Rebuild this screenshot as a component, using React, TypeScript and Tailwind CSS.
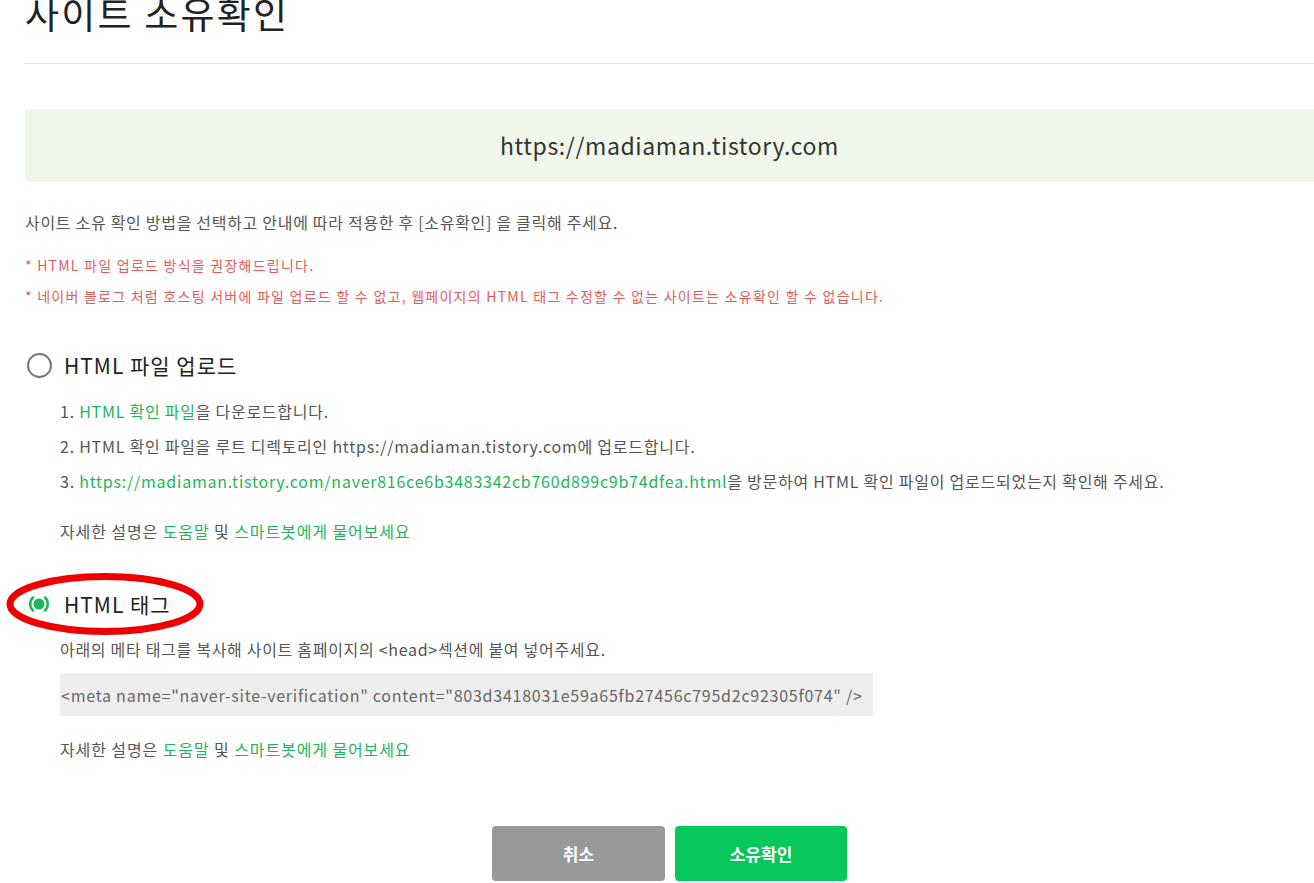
import React from "react";

const green = "text-[#1fb45a]";

function Help() {
  return (
    <p className="text-[16px] tracking-[0.9px] text-[#555] leading-[22px]">
      자세한 설명은 <span className={green}>도움말</span> 및{" "}
      <span className={green}>스마트봇에게 물어보세요</span>
    </p>
  );
}

export default function App() {
  return (
    <div
      className="relative w-[1314px] h-[883px] overflow-hidden bg-white"
      style={{ fontFamily: '"Noto Sans CJK KR", "Noto Sans", sans-serif' }}
    >
      <div className="pl-[25px]">
        <h1 className="mt-[-12px] text-[37px] leading-[50px] text-[#222] font-normal tracking-[2.2px]">
          사이트 소유확인
        </h1>
        <div className="mt-[25px] h-px bg-[#e3e3e3]" />

        <div className="mt-[45px] h-[73px] bg-[#f1f7ea] flex items-center justify-center text-[23px] tracking-[0.6px] text-[#333]">
          https://madiaman.tistory.com
        </div>

        <p className="mt-[29px] text-[16px] tracking-[0.7px] text-[#555] leading-[22px]">
          사이트 소유 확인 방법을 선택하고 안내에 따라 적용한 후 [소유확인] 을 클릭해 주세요.
        </p>
        <p className="mt-[22px] text-[14px] tracking-[1.25px] text-[#e55c5c] leading-[20px]">
          * HTML 파일 업로드 방식을 권장해드립니다.
        </p>
        <p className="mt-[11px] text-[14px] tracking-[1.25px] text-[#e55c5c] leading-[20px]">
          * 네이버 블로그 처럼 호스팅 서버에 파일 업로드 할 수 없고, 웹페이지의 HTML 태그 수정할 수 없는 사이트는 소유확인 할 수 없습니다.
        </p>

        <div className="mt-[45px] flex items-center gap-[12px]">
          <div className="w-[25px] h-[25px] rounded-full border-[2.5px] border-[#777] ml-[2px]" />
          <span className="text-[21px] tracking-[1px] text-[#222] leading-[28px]">HTML 파일 업로드</span>
        </div>

        <div className="pl-[35px]">
          <div className="mt-[21px] flex flex-col gap-[13px] text-[16px] tracking-[0.75px] text-[#555] leading-[22px]">
            <p>
              1. <span className={green}>HTML 확인 파일</span>을 다운로드합니다.
            </p>
            <p>2. HTML 확인 파일을 루트 디렉토리인 https://madiaman.tistory.com에 업로드합니다.</p>
            <p>
              3.{" "}
              <span className={green}>
                https://madiaman.tistory.com/naver816ce6b3483342cb760d899c9b74dfea.html
              </span>
              을 방문하여 HTML 확인 파일이 업로드되었는지 확인해 주세요.
            </p>
          </div>
          <div className="mt-[28px]">
            <Help />
          </div>
        </div>

        <div className="mt-[48px] flex items-center gap-[12px]">
          <svg width="26" height="26" viewBox="0 0 26 26" className="ml-[1px]">
            <path d="M7 6.5 A9 9 0 0 0 7 19.5" fill="none" stroke="#1fb45a" strokeWidth="2.5" strokeLinecap="round" />
            <path d="M19 6.5 A9 9 0 0 1 19 19.5" fill="none" stroke="#1fb45a" strokeWidth="2.5" strokeLinecap="round" />
            <circle cx="13" cy="13" r="5.5" fill="#1fb45a" />
          </svg>
          <span className="text-[21px] tracking-[1px] text-[#222] leading-[28px]">HTML 태그</span>
        </div>

        <div className="pl-[35px]">
          <p className="mt-[20px] text-[16px] tracking-[0.7px] text-[#555] leading-[22px]">
            아래의 메타 태그를 복사해 사이트 홈페이지의 &lt;head&gt;섹션에 붙여 넣어주세요.
          </p>
          <div className="mt-[13px] w-[813px] h-[43px] bg-[#eeeeee] flex items-center px-[1px] text-[16px] tracking-[0.75px] text-[#666]">
            &lt;meta name="naver-site-verification" content="803d3418031e59a65fb27456c795d2c92305f074" /&gt;
          </div>
          <div className="mt-[22px]">
            <Help />
          </div>
        </div>

        <div className="mt-[66px] flex justify-center gap-[10px]">
          <button className="w-[173px] h-[55px] rounded-[4px] bg-[#999999] text-white text-[17px] font-bold">
            취소
          </button>
          <button className="w-[172px] h-[55px] rounded-[4px] bg-[#06c75a] text-white text-[17px] font-bold">
            소유확인
          </button>
        </div>
      </div>

      <svg className="absolute left-0 top-[570px] pointer-events-none" width="215" height="70" viewBox="0 0 215 70">
        <ellipse cx="105" cy="34" rx="95" ry="27.5" fill="none" stroke="#ee0000" strokeWidth="7" />
      </svg>
    </div>
  );
}
